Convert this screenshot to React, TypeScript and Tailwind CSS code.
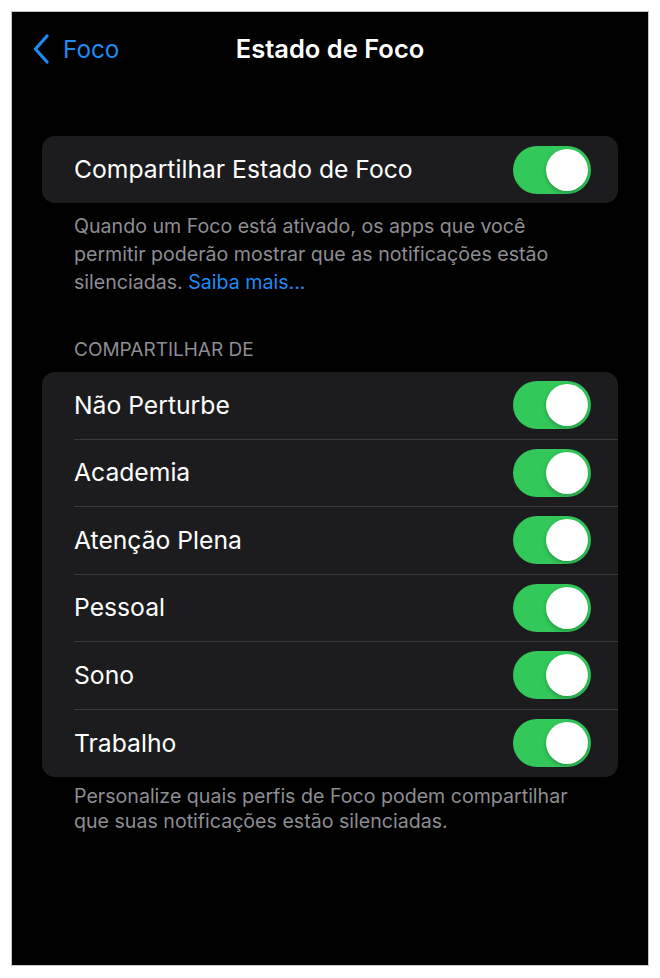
const PROFILES = ['Não Perturbe', 'Academia', 'Atenção Plena', 'Pessoal', 'Sono', 'Trabalho']

function Toggle() {
  return (
    <div className="relative h-[48px] w-[78px] shrink-0 rounded-full bg-[#32c85a]">
      <div className="absolute right-[3px] top-[3px] size-[42px] rounded-full bg-white shadow-[0_2px_4px_rgba(0,0,0,0.25)]" />
    </div>
  )
}

export default function App() {
  return (
    <div className="min-h-screen bg-white p-[11px] font-['Inter',sans-serif]">
      <div className="h-[955px] w-[638px] border border-[#c4c4c4] bg-black">
        {/* nav bar */}
        <div className="relative flex h-[74px] items-center justify-center">
          <div className="absolute left-[21px] top-0 flex h-full items-center gap-[14px] text-[#1e8bf5]">
            <svg width="16" height="30" viewBox="0 0 16 30" fill="none">
              <path d="M14 2 L2.5 15 L14 28" stroke="currentColor" strokeWidth="3.2" strokeLinecap="round" strokeLinejoin="round" />
            </svg>
            <span className="text-[24.3px]">Foco</span>
          </div>
          <h1 className="text-[25.5px] font-semibold text-white">Estado de Foco</h1>
        </div>

        <div className="px-[30px] pt-[50px]">
          <div className="flex h-[67px] items-center justify-between rounded-[13px] bg-[#1c1c1e] pl-[32px] pr-[27px]">
            <span className="text-[24.7px] text-white">Compartilhar Estado de Foco</span>
            <Toggle />
          </div>
          <p className="mt-[9px] px-[32px] text-[19.6px] leading-[28px] text-[#8d8d93]">
            Quando um Foco está ativado, os apps que você permitir poderão mostrar que as notificações estão
            silenciadas. <span className="text-[#1e8bf5]">Saiba mais...</span>
          </p>

          <p className="mt-[42px] px-[32px] text-[19px] uppercase leading-[24px] text-[#8d8d93]">
            Compartilhar de
          </p>
          <div className="mt-[10px] overflow-hidden rounded-[13px] bg-[#1c1c1e]">
            {PROFILES.map((name, i) => (
              <div key={name} className="pl-[32px]">
                <div
                  className={`flex h-[67.5px] items-center justify-between pr-[27px] ${
                    i < PROFILES.length - 1 ? 'border-b border-[#3a3a3c]' : ''
                  }`}
                >
                  <span className="text-[24.7px] text-white">{name}</span>
                  <Toggle />
                </div>
              </div>
            ))}
          </div>
          <p className="mt-[7px] px-[32px] text-[19.6px] leading-[25px] text-[#8d8d93]">
            Personalize quais perfis de Foco podem compartilhar que suas notificações estão silenciadas.
          </p>
        </div>
      </div>
    </div>
  )
}
